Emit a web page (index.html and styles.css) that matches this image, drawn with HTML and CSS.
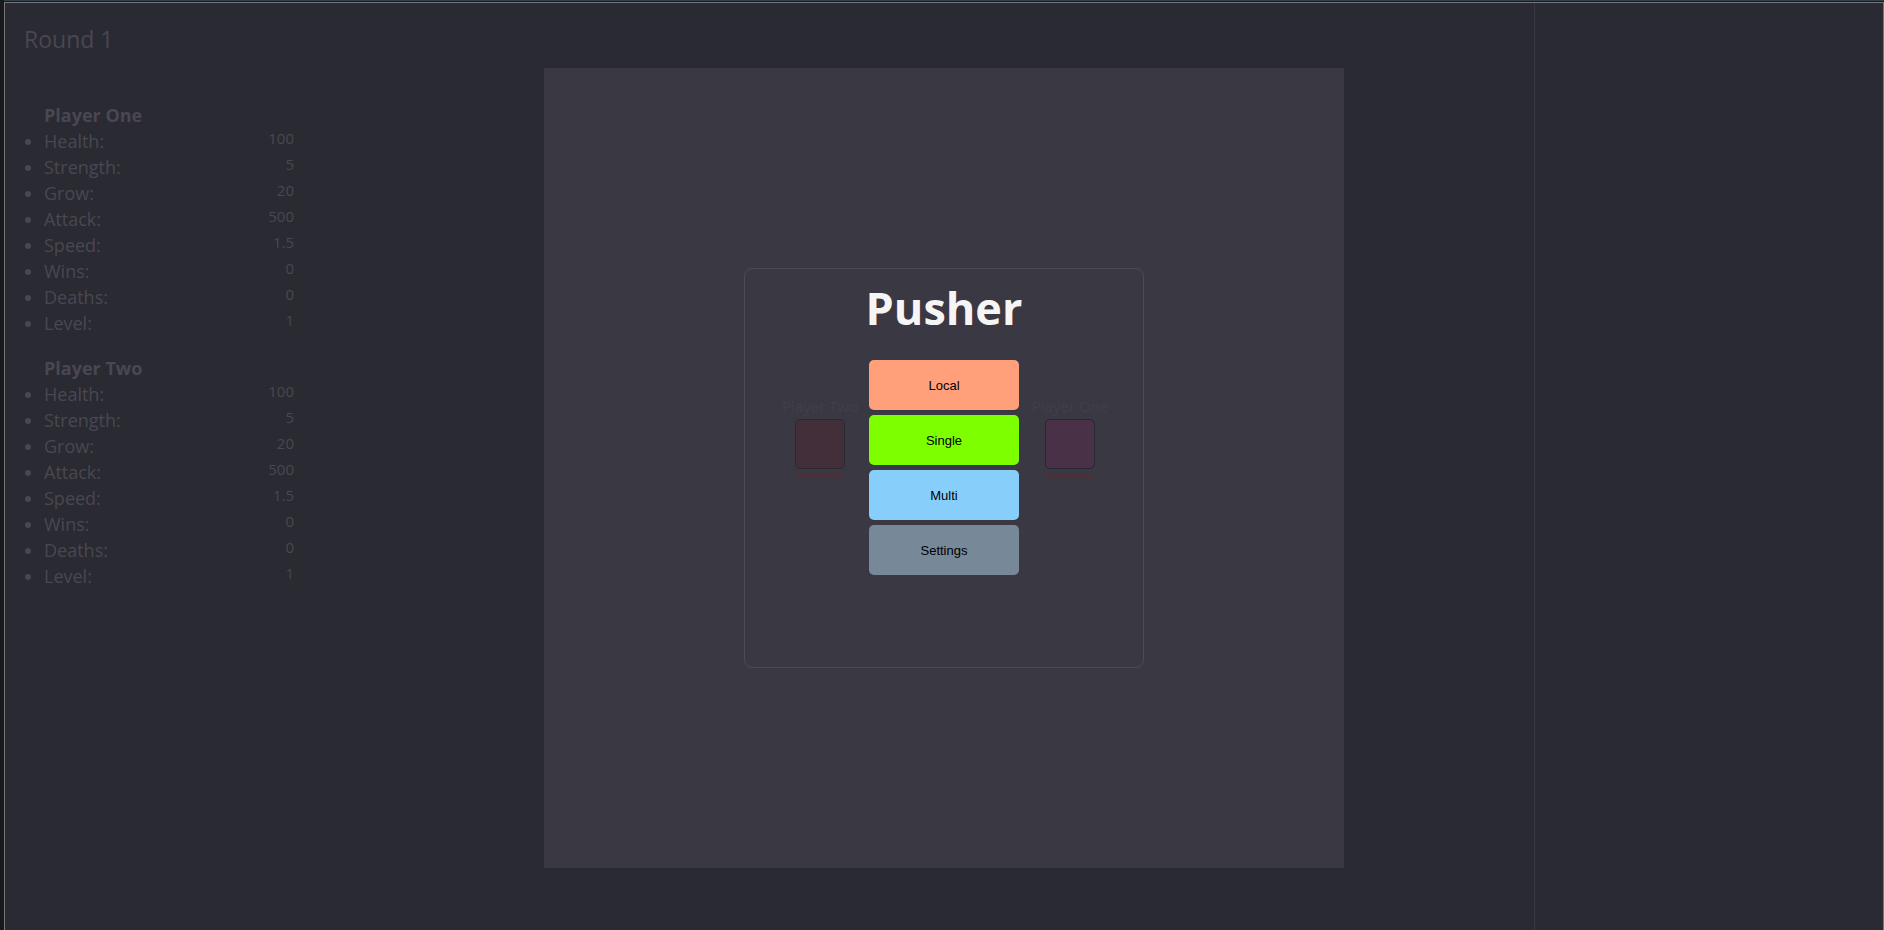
FILE: index.html
```html
<!DOCTYPE html>
<html lang="en">
<head>
<meta charset="utf-8">
<title>Pusher</title>
<link rel="stylesheet" href="styles.css">
</head>
<body>
<main class="game">
  <aside class="stats">
    <p class="round">Round 1</p>
    <ul class="player-stats">
      <li class="name">Player One</li>
      <li><span class="row">Health: <span class="value">100</span></span></li>
      <li><span class="row">Strength: <span class="value">5</span></span></li>
      <li><span class="row">Grow: <span class="value">20</span></span></li>
      <li><span class="row">Attack: <span class="value">500</span></span></li>
      <li><span class="row">Speed: <span class="value">1.5</span></span></li>
      <li><span class="row">Wins: <span class="value">0</span></span></li>
      <li><span class="row">Deaths: <span class="value">0</span></span></li>
      <li><span class="row">Level: <span class="value">1</span></span></li>
    </ul>
    <ul class="player-stats">
      <li class="name">Player Two</li>
      <li><span class="row">Health: <span class="value">100</span></span></li>
      <li><span class="row">Strength: <span class="value">5</span></span></li>
      <li><span class="row">Grow: <span class="value">20</span></span></li>
      <li><span class="row">Attack: <span class="value">500</span></span></li>
      <li><span class="row">Speed: <span class="value">1.5</span></span></li>
      <li><span class="row">Wins: <span class="value">0</span></span></li>
      <li><span class="row">Deaths: <span class="value">0</span></span></li>
      <li><span class="row">Level: <span class="value">1</span></span></li>
    </ul>
  </aside>
  <section class="board">
    <div class="player player-two"><span class="tag">Player Two</span><div class="body"></div><div class="health"></div></div>
    <div class="player player-one"><span class="tag">Player One</span><div class="body"></div><div class="health"></div></div>
    <nav class="menu">
      <h1 class="title">Pusher</h1>
      <button type="button" class="choice local">Local</button>
      <button type="button" class="choice single">Single</button>
      <button type="button" class="choice multi">Multi</button>
      <button type="button" class="choice settings">Settings</button>
    </nav>
  </section>
  <aside class="side"></aside>
</main>
</body>
</html>
```
FILE: styles.css
```css
* { box-sizing: border-box; }
html { overflow: hidden; }
body {
  margin: 0;
  padding: 0 0 0 4px;
  background: #17191d;
  color: #494751;
  font-family: "Segoe UI", "Open Sans", sans-serif;
}
.game {
  display: grid;
  grid-template-columns: 1fr auto 1fr;
  height: calc(100vh + 2px);
  margin-top: 2px;
  border: 1px solid #77767a;
  background: #2a2a33;
}
body::before {
  content: "";
  position: absolute;
  top: 0;
  left: 4px;
  right: 0;
  height: 1px;
  background: #33414e;
}
.stats { padding: 19px; }
.round { margin: 0 0 46px; font-size: 23px; line-height: 34px; }
.player-stats {
  width: 270px;
  margin: 0 0 19px;
  padding: 0 0 0 20px;
  font-size: 18px;
  line-height: 26px;
}
.name { list-style: none; font-weight: 700; }
.row { display: flex; justify-content: space-between; }
.value { font-size: 15px; line-height: 20px; }
.board {
  position: relative;
  align-self: center;
  display: grid;
  place-items: center;
  width: 800px;
  height: 800px;
  background: #3a3842;
}
.player {
  position: absolute;
  top: 50%;
  width: 50px;
  margin-top: -73px;
  display: flex;
  flex-direction: column;
  align-items: center;
}
.player-two { left: 251px; }
.player-one { left: 501px; }
.tag { margin-bottom: 2px; font-size: 15px; line-height: 22px; white-space: nowrap; color: #423f49; }
.body { width: 50px; height: 50px; border: 1px solid #29272f; border-radius: 5px; }
.player-two .body { background: #432f39; }
.player-one .body { background: #493147; }
.health { width: 48px; height: 5px; margin-top: 4px; background: #4b303a; }
.menu {
  position: relative;
  display: flex;
  flex-direction: column;
  align-items: center;
  gap: 5px;
  width: 400px;
  height: 400px;
  padding-top: 9px;
  border: 1px solid #4c4a54;
  border-radius: 8px;
}
.title { margin: 0 0 17px; font-size: 45px; line-height: 60px; color: #f5f5f5; }
.choice {
  width: 150px;
  height: 50px;
  padding: 0;
  border: 0;
  border-radius: 5px;
  color: #000;
  font-family: "Liberation Sans", Arial, sans-serif;
  font-size: 13px;
}
.local { background: #ffa07a; }
.single { background: #7dff00; }
.multi { background: #87cefa; }
.settings { background: #778899; }
.side { justify-self: end; width: 349px; border-left: 1px solid #393842; }
```
